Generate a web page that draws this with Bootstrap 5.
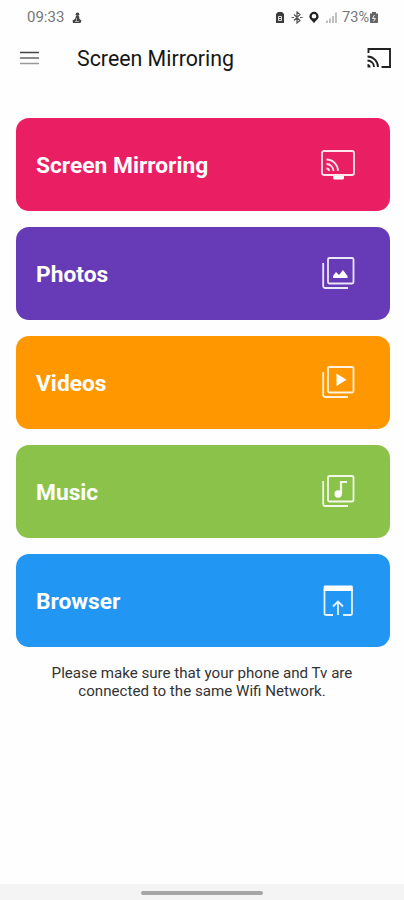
<!DOCTYPE html>
<html lang="en">
<head>
<meta charset="utf-8">
<meta name="viewport" content="width=device-width, initial-scale=1">
<title>Screen Mirroring</title>
<link href="https://cdn.jsdelivr.net/npm/bootstrap@5.3.0/dist/css/bootstrap.min.css" rel="stylesheet">
<style>
body{font-family:Roboto,"Liberation Sans",sans-serif;background:#fefefe;color:#111}
.screen{height:900px}
.status{height:34px;padding:1px 25px 0 27px;font-size:14.500px;color:#777}
.clock{font-size:15px}
.status-icons{gap:6px}
.appbar{height:50px;padding:0 13px 2px 20px}
.app-title{font-size:21.350px;margin-left:38px;color:#161616;line-height:1;padding-top:2px}
.tiles{padding:34px 14px 0 16px;gap:16px}
.tile{height:93px;border-radius:13px;padding:0 35px 0 20px;color:#fff;font-size:22.750px;font-weight:700;line-height:1;text-decoration:none}
.tile:hover{color:#fff}
.tile span{padding-top:3px}
.t-pink{background:#e91e63}.t-purple{background:#673ab7}.t-orange{background:#ff9800}.t-green{background:#8bc34a}.t-blue{background:#2196f3}
.tile svg{fill:none;stroke:#fff;stroke-opacity:.88;stroke-width:1.8}
.tile .stacked{margin-bottom:2px}
.note{font-size:15.130px;line-height:17.5px;padding-top:18px;color:#333}
.gesture{height:16px;background:#f4f4f4;padding-top:2px}
.pill{width:122px;height:4px;background:#a6a6a6}
</style>
<script src="https://cdn.jsdelivr.net/npm/bootstrap@5.3.0/dist/js/bootstrap.bundle.min.js"></script>
</head>
<body>
<div class="screen d-flex flex-column overflow-hidden">
  <div class="status d-flex align-items-center justify-content-between">
    <div class="d-flex align-items-center gap-2">
      <span class="clock">09:33</span>
      <svg width="10" height="12" viewBox="0 0 10 12" fill="#444"><circle cx="5.500" cy="2.300" r="1.800"/><path d="M4 4h3l.5 3 2 1.500-1 2.500H1L.5 8.500 3 7z"/><path d="M3 9.500h4M4.500 6v3" stroke="#bbb" stroke-width=".8"/></svg>
    </div>
    <div class="status-icons d-flex align-items-center">
      <svg width="10" height="13" viewBox="0 0 10 13"><path d="M3 1h4l2 2v9H1V3z" fill="#3c3c3c"/><path d="M3.500 5.500h3v4h-3zM3.500 7.500h3" fill="none" stroke="#ddd"/></svg>
      <svg width="12" height="13" viewBox="0 0 12 13" fill="none" stroke="#555" stroke-width="1.200"><path d="m3 3.500 6 6-3 2.500V1l3 2.500-6 6M.5 6.500h2.500M9 6.500h2.500"/></svg>
      <svg width="10" height="13" viewBox="0 0 10 13"><path fill-rule="evenodd" fill="#222" d="M5 .8A4.600 4.600 0 0 0 .4 5.400C.4 8 3.200 9 5 12.300 6.800 9 9.600 8 9.600 5.400A4.600 4.600 0 0 0 5 .8zm0 2.200a2.300 2.300 0 1 1 0 4.600A2.300 2.300 0 0 1 5 3z"/></svg>
      <div class="d-flex align-items-center">
        <svg width="13" height="13" viewBox="0 0 13 13" stroke="#b5b5b5" stroke-width="1.700"><path d="M2 12V9.500M5 12V7.500M8 12V5M11 12V1.500"/></svg>
        <span class="ms-1 text-nowrap">73%</span>
        <svg width="10" height="13" viewBox="0 0 10 13"><path d="M3 1h4v1.500h2V12H1V2.500h2z" fill="#666"/><path d="m5.500 4-2 3.500h3l-2 3" fill="none" stroke="#eee"/></svg>
      </div>
    </div>
  </div>
  <nav class="appbar d-flex align-items-center">
    <svg width="19" height="14" viewBox="0 0 19 14" fill="none" stroke-width="1.500"><path d="M0 1.500h19" stroke="#444"/><path d="M0 7h19" stroke="#666"/><path d="M0 12.500h19" stroke="#999"/></svg>
    <h1 class="app-title mb-0 fw-normal">Screen Mirroring</h1>
    <svg class="ms-auto" width="24" height="20" viewBox="0 0 24 20" fill="none" stroke="#222" stroke-width="1.900"><path d="M1.500 5V1H23v18h-8.500"/><path d="M.5 8.500A10.500 10.500 0 0 1 11 19M.5 12.500A6.500 6.500 0 0 1 7 19"/><path d="M.5 16a3 3 0 0 1 3 3.500h-3z" fill="#222" stroke="none"/></svg>
  </nav>
  <main class="tiles d-flex flex-column">
    <a href="#" class="tile t-pink d-flex align-items-center justify-content-between"><span>Screen Mirroring</span>
      <svg width="34" height="32" viewBox="0 0 34 32"><rect x="1" y="2" width="32" height="24" rx="2"/><path d="M5.500 10.500A11.500 11.500 0 0 1 17 22M5.500 15a7 7 0 0 1 7 7M5.500 19.500A2.500 2.500 0 0 1 8 22"/><path d="M12 27h11v2a1.500 1.500 0 0 1-1.500 1.500h-8A1.500 1.500 0 0 1 12 29z" fill="#fff" stroke="none"/></svg></a>
    <a href="#" class="tile t-purple d-flex align-items-center justify-content-between"><span>Photos</span>
      <svg class="stacked" width="34" height="34" viewBox="0 0 34 34"><rect x="7" y="2" width="25.500" height="25.500" rx="1.500"/><path d="M2.200 7v23a2 2 0 0 0 2 2H27"/><path d="M12 22v-2l3-4 3 3 4-5 4.500 6v2z" fill="#fff" stroke="none"/></svg></a>
    <a href="#" class="tile t-orange d-flex align-items-center justify-content-between"><span>Videos</span>
      <svg class="stacked" width="34" height="34" viewBox="0 0 34 34"><rect x="7" y="2" width="25.500" height="25.500" rx="1.500"/><path d="M2.200 7v23a2 2 0 0 0 2 2H27"/><path d="m15.500 8.500 10 6.200-10 6.300z" fill="#fff" stroke="none"/></svg></a>
    <a href="#" class="tile t-green d-flex align-items-center justify-content-between"><span>Music</span>
      <svg class="stacked" width="34" height="34" viewBox="0 0 34 34"><rect x="7" y="2" width="25.500" height="25.500" rx="1.500"/><path d="M2.200 7v23a2 2 0 0 0 2 2H27"/><circle cx="17.200" cy="20" r="3.700" fill="#fff" stroke="none"/><path d="M20 20V8h6" stroke-width="2.200"/></svg></a>
    <a href="#" class="tile t-blue d-flex align-items-center justify-content-between"><span>Browser</span>
      <svg width="34" height="34" viewBox="0 0 34 34"><path d="M12 31H5a1.500 1.500 0 0 1-1.500-1.500V5M22 31h7.500a1.500 1.500 0 0 0 1.500-1.500V5M17 31V18M12 22.500l5-5 5 5"/><path d="M4 1.500h26.500a1.300 1.300 0 0 1 1.300 1.300V7H2.700V2.800A1.300 1.300 0 0 1 4 1.500z" fill="#fff" stroke="none"/></svg></a>
  </main>
  <p class="note text-center mb-0">Please make sure that your phone and Tv are<br>connected to the same Wifi Network.</p>
  <div class="gesture mt-auto d-flex align-items-center justify-content-center"><div class="pill rounded-pill"></div></div>
</div>
</body>
</html>
